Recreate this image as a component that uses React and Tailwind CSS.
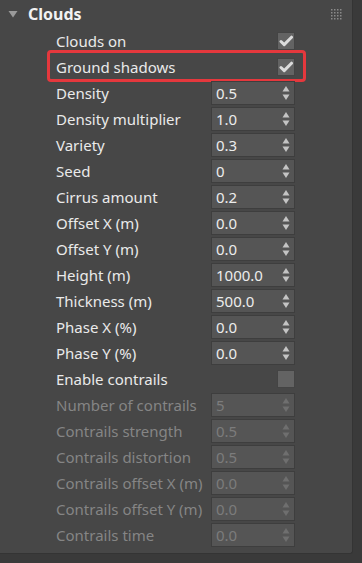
import React from "react";

const rows = [
  { label: "Clouds on", type: "check", checked: true },
  { label: "Ground shadows", type: "check", checked: true, highlight: true },
  { label: "Density", value: "0.5" },
  { label: "Density multiplier", value: "1.0" },
  { label: "Variety", value: "0.3" },
  { label: "Seed", value: "0" },
  { label: "Cirrus amount", value: "0.2" },
  { label: "Offset X (m)", value: "0.0" },
  { label: "Offset Y (m)", value: "0.0" },
  { label: "Height (m)", value: "1000.0" },
  { label: "Thickness (m)", value: "500.0" },
  { label: "Phase X (%)", value: "0.0" },
  { label: "Phase Y (%)", value: "0.0" },
  { label: "Enable contrails", type: "check", checked: false },
  { label: "Number of contrails", value: "5", disabled: true },
  { label: "Contrails strength", value: "0.5", disabled: true },
  { label: "Contrails distortion", value: "0.5", disabled: true },
  { label: "Contrails offset X (m)", value: "0.0", disabled: true },
  { label: "Contrails offset Y (m)", value: "0.0", disabled: true },
  { label: "Contrails time", value: "0.0", disabled: true },
];

const Spinner = ({ disabled }) => (
  <svg width="8" height="16" viewBox="0 0 8 16" className={disabled ? "fill-[#6f6f6f]" : "fill-[#c4c4c4]"}>
    <path d="M4 1 L7.5 6.5 H0.5 Z" />
    <path d="M4 15 L7.5 9.5 H0.5 Z" />
  </svg>
);

const Checkbox = ({ checked }) => (
  <div className="w-[18px] h-[18px] bg-[#636363] border border-[#444444] flex items-center justify-center">
    {checked && (
      <svg width="14" height="12" viewBox="0 0 14 12">
        <path d="M2 6.5 L5.2 9.6 L12.5 2.2" fill="none" stroke="#dcdcdc" strokeWidth="3" strokeLinecap="round" strokeLinejoin="round" />
      </svg>
    )}
  </div>
);

const NumberBox = ({ value, disabled }) => (
  <div className="w-[84px] h-[24px] bg-[#555555] border border-[#3e3e3e] flex items-center justify-between pl-[4px] pr-[4px]">
    <span className={disabled ? "text-[#7c7c7c]" : "text-[#ececec]"}>{value}</span>
    <Spinner disabled={disabled} />
  </div>
);

const Row = ({ row }) => (
  <div className="relative h-[26px] flex items-center pl-[56px]">
    {row.highlight && (
      <div className="absolute left-[47px] -top-[4px] w-[259px] h-[32px] border-[3px] border-[#e5383d] rounded-[4px]" />
    )}
    <span className={`w-[155px] whitespace-nowrap ${row.disabled ? "text-[#858585]" : "text-[#eaeaea]"}`}>
      {row.label}
    </span>
    {row.type === "check" ? (
      <div className="w-[84px] flex justify-end">
        <Checkbox checked={row.checked} />
      </div>
    ) : (
      <NumberBox value={row.value} disabled={row.disabled} />
    )}
  </div>
);

const GripIcon = () => (
  <svg width="11" height="11" viewBox="0 0 11 11" className="fill-[#8a8a8a]">
    {[0, 3, 6, 9].map((y) =>
      [0, 3, 6, 9].map((x) => <rect key={`${x}-${y}`} x={x} y={y} width="1.5" height="1.5" />)
    )}
  </svg>
);

export default function App() {
  return (
    <div className="w-[362px] h-[563px] bg-[#3a3a3a] overflow-hidden font-['Segoe_UI','Noto_Sans',sans-serif] text-[15px] leading-none">
      <div className="w-[353px] h-[554px] bg-[#474747] border-r border-b border-[#343434] rounded-br-[3px]">
        <div className="h-[28px] flex items-center pl-[8px] pr-[10px]">
          <svg width="10" height="8" viewBox="0 0 10 8" className="fill-[#9a9a9a]">
            <path d="M0.5 1 H9.5 L5 7.5 Z" />
          </svg>
          <span className="ml-[10px] font-bold text-[16px] text-[#f2f2f2] flex-1">Clouds</span>
          <GripIcon />
        </div>
        {rows.map((row) => (
          <Row key={row.label} row={row} />
        ))}
      </div>
    </div>
  );
}
